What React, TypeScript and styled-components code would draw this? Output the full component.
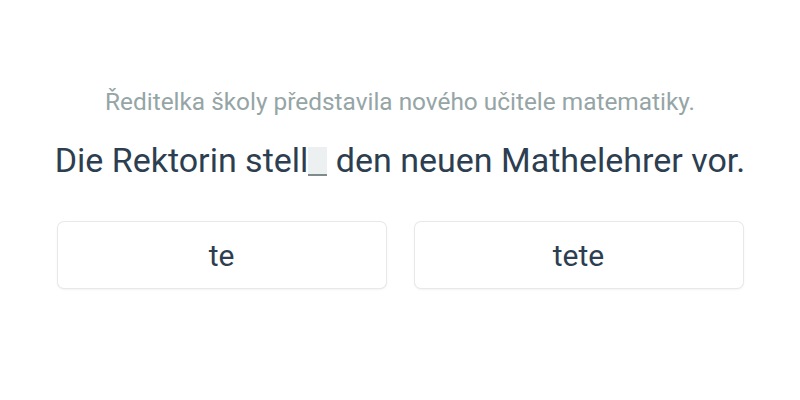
import React from "react";
import styled, { createGlobalStyle } from "styled-components";

const GlobalStyle = createGlobalStyle`
  html, body {
    margin: 0;
    padding: 0;
    background: #ffffff;
    font-family: Roboto, "Liberation Sans", sans-serif;
  }
`;

const Page = styled.div`
  width: 800px;
  height: 400px;
  display: flex;
  flex-direction: column;
  align-items: center;
  padding-top: 88px;
  box-sizing: border-box;
`;

const Hint = styled.div`
  font-size: 24.4px;
  line-height: 28px;
  color: #95a5a6;
`;

const Sentence = styled.div`
  margin-top: 24px;
  font-size: 34px;
  line-height: 40px;
  color: #2c3e50;
`;

const Blank = styled.span`
  display: inline-block;
  width: 19px;
  height: 27px;
  vertical-align: -4px;
  background: #ecf0f1;
  border-bottom: 2px solid #7f8c8d;
`;

const Options = styled.div`
  margin-top: 42px;
  display: flex;
  gap: 29px;
`;

const Option = styled.button`
  width: 328px;
  height: 66px;
  background: #ffffff;
  border: none;
  border-radius: 6px;
  box-shadow: 0 0 0 1px #e8e8e8, 0 1px 3px rgba(0, 0, 0, 0.1);
  font-family: Roboto, "Liberation Sans", sans-serif;
  font-size: 30px;
  color: #2c3e50;
  cursor: pointer;
`;

export default function App() {
  return (
    <>
      <GlobalStyle />
      <Page>
        <Hint>Ředitelka školy představila nového učitele matematiky.</Hint>
        <Sentence>
          Die Rektorin stell<Blank /> den neuen Mathelehrer vor.
        </Sentence>
        <Options>
          <Option>te</Option>
          <Option>tete</Option>
        </Options>
      </Page>
    </>
  );
}
